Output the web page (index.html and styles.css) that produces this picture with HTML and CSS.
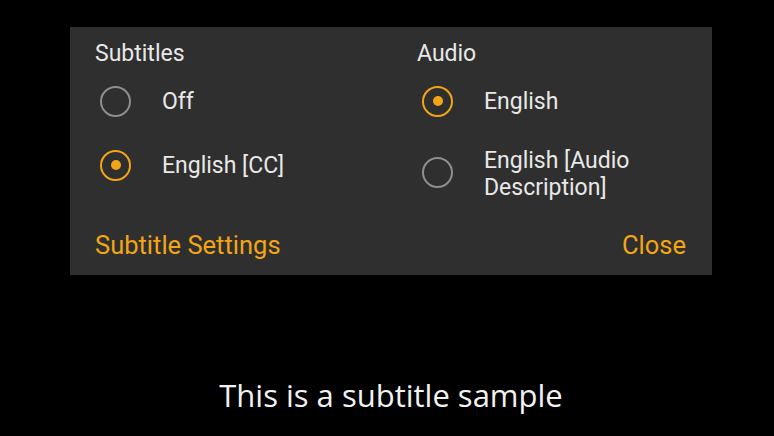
FILE: index.html
```html
<!DOCTYPE html>
<html>
<head>
<meta charset="utf-8">
<link rel="stylesheet" href="styles.css">
</head>
<body>
<div class="panel">
  <div class="cols">
    <div class="col">
      <div class="heading">Subtitles</div>
      <div class="row"><span class="radio"></span><span class="label">Off</span></div>
      <div class="row"><span class="radio on"></span><span class="label">English [CC]</span></div>
    </div>
    <div class="col">
      <div class="heading">Audio</div>
      <div class="row"><span class="radio on"></span><span class="label">English</span></div>
      <div class="row tall"><span class="radio"></span><span class="label">English [Audio<br>Description]</span></div>
    </div>
  </div>
  <div class="footer">
    <span class="link">Subtitle Settings</span>
    <span class="link">Close</span>
  </div>
</div>
<div class="caption">This is a subtitle sample</div>
</body>
</html>
```
FILE: styles.css
```css
html, body { margin: 0; padding: 0; }
body {
  background: #000;
  width: 774px;
  height: 436px;
  overflow: hidden;
  font-family: Roboto, "Liberation Sans", sans-serif;
  color: #e8e8e8;
}
.panel {
  margin: 27px 0 0 70px;
  width: 642px;
  height: 248px;
  box-sizing: border-box;
  background: #2f2f2f;
  padding: 14px 26px 16px 25px;
  display: flex;
  flex-direction: column;
}
.cols {
  display: grid;
  grid-template-columns: 322px 1fr;
}
.heading {
  font-size: 23px;
  line-height: 26px;
  margin-bottom: 2px;
}
.row {
  display: flex;
  align-items: center;
  min-height: 64px;
  padding-left: 5px;
}
.row.tall { padding-top: 7px; }
.row.tall .label { margin-top: 4px; }
.label {
  font-size: 23px;
  line-height: 27px;
}
.radio {
  width: 31px;
  height: 31px;
  box-sizing: border-box;
  border: 2.75px solid #8e8e8e;
  border-radius: 50%;
  margin-right: 31px;
  flex: none;
  display: flex;
  align-items: center;
  justify-content: center;
}
.radio.on { border-color: #f2a516; }
.radio.on::after {
  content: "";
  width: 10px;
  height: 10px;
  border-radius: 50%;
  background: #f2a516;
}
.footer {
  margin-top: auto;
  display: flex;
  justify-content: space-between;
}
.link {
  color: #f2a516;
  font-size: 25.5px;
  line-height: 27px;
}
.caption {
  text-align: center;
  margin-top: 101px;
  padding-left: 8px;
  font-family: "Open Sans", sans-serif;
  font-size: 31px;
  line-height: 38px;
  color: #f2f2f2;
}
```
